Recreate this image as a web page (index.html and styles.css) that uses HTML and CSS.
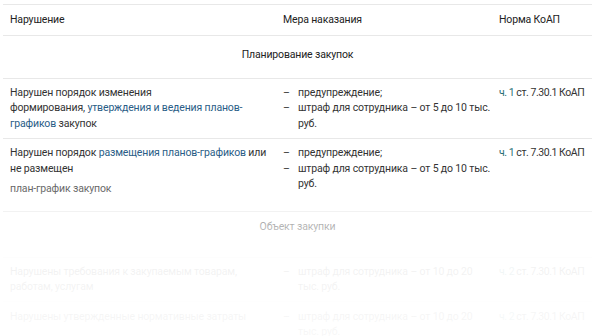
FILE: index.html
```html
<!DOCTYPE html>
<html lang="ru">
<head>
<meta charset="utf-8">
<link rel="stylesheet" href="styles.css">
</head>
<body>
<div class="wrap">
  <div class="table">
    <div class="row head">
      <div class="c1">Нарушение</div>
      <div class="c2">Мера наказания</div>
      <div class="c3 hc">Норма КоАП</div>
    </div>
    <div class="section s1">Планирование закупок</div>
    <div class="row r1">
      <div class="c1">Нарушен порядок изменения<br>формирования, <a class="lnk">утверждения и ведения планов-графиков</a> закупок</div>
      <div class="c2">
        <ul class="dash">
          <li>предупреждение;</li>
          <li>штраф для сотрудника – от 5 до 10 тыс. руб.</li>
        </ul>
      </div>
      <div class="c3"><a class="lnk">ч. 1</a> ст. 7.30.1 КоАП</div>
    </div>
    <div class="row r2">
      <div class="c1">Нарушен порядок <a class="lnk">размещения планов-графиков</a> или не размещен
        <p class="sub">план-график закупок</p>
      </div>
      <div class="c2">
        <ul class="dash">
          <li>предупреждение;</li>
          <li>штраф для сотрудника – от 5 до 10 тыс. руб.</li>
        </ul>
      </div>
      <div class="c3"><a class="lnk">ч. 1</a> ст. 7.30.1 КоАП</div>
    </div>
    <div class="section s2">Объект закупки</div>
    <div class="row r3">
      <div class="c1">Нарушены требования к закупаемым товарам, работам, услугам</div>
      <div class="c2">
        <ul class="dash">
          <li>штраф для сотрудника – от 10 до 20 тыс. руб.</li>
        </ul>
      </div>
      <div class="c3"><a class="lnk">ч. 2</a> ст. 7.30.1 КоАП</div>
    </div>
    <div class="row r4">
      <div class="c1">Нарушены утвержденные нормативные затраты</div>
      <div class="c2">
        <ul class="dash">
          <li>штраф для сотрудника – от 10 до 20 тыс. руб.</li>
        </ul>
      </div>
      <div class="c3"><a class="lnk">ч. 2</a> ст. 7.30.1 КоАП</div>
    </div>
  </div>
  <div class="fade"></div>
</div>
</body>
</html>
```
FILE: styles.css
```css
* { box-sizing: border-box; }
html, body { margin: 0; padding: 0; background: #fff; }
body {
  font-family: Roboto, "Liberation Sans", sans-serif;
  font-size: 10.5px;
  letter-spacing: -0.15px;
  line-height: 15.5px;
  color: #333;
  width: 600px;
  height: 336px;
  overflow: hidden;
}
.wrap { position: relative; padding: 4px 8px 0 3px; }
.table { border-top: 1px solid #e8e8e8; }
.row {
  display: grid;
  grid-template-columns: 273px 216px 1fr;
  border-bottom: 1px solid #e8e8e8;
}
.row.head, .row.r1, .row.r2, .row.r3, .row.r4 { padding-left: 7px; }
.head { min-height: 31px; align-items: center; color: #222; }
.c1 { padding-right: 8px; }
.c2 { padding-right: 8px; }
.c3 { white-space: nowrap; letter-spacing: -0.45px; }
.c3.hc { letter-spacing: -0.15px; }
.r1 { padding-top: 6px; padding-bottom: 7px; min-height: 60px; }
.r2 { padding-top: 6px; padding-bottom: 13px; min-height: 73px; }
.r3 { padding-top: 6px; padding-bottom: 6px; min-height: 43px; }
.r4 { padding-top: 7px; padding-bottom: 6px; min-height: 43px; }
.section {
  text-align: center;
  color: #222;
  border-bottom: 1px solid #e8e8e8;
}
.s1 { padding: 11px 0 15px; }
.s2 { padding: 7px 0 22px; }
.lnk { color: #2a5d86; text-decoration: none; }
.c3 .lnk { color: #2a6f75; }
.sub { margin: 5px 0 0; color: #666; }
.dash { list-style: none; margin: 0; padding: 0; }
.dash li { position: relative; padding-left: 15px; }
.dash li::before { content: "–"; position: absolute; left: 0; top: 0; }
.fade {
  position: absolute;
  left: 0; right: 0; top: 188px; bottom: -100px;
  background: linear-gradient(to bottom, rgba(255,255,255,0) 0px, rgba(255,255,255,0.62) 34px, rgba(255,255,255,0.93) 68px, rgba(255,255,255,0.96) 150px);
}
```
